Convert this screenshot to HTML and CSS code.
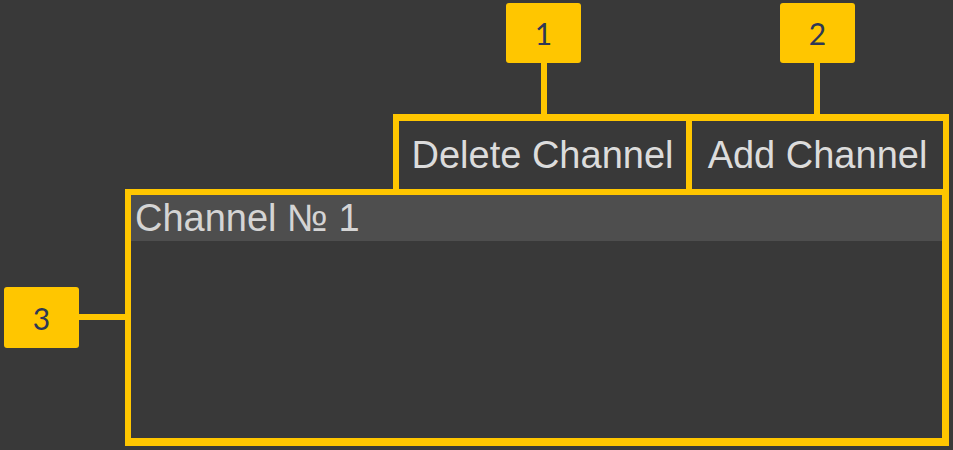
FILE: index.html
```html
<!DOCTYPE html>
<html>
<head>
<meta charset="utf-8">
<link rel="stylesheet" href="styles.css">
</head>
<body>
<div class="page">
  <div class="toolbar">
    <div class="btn-group">
      <div class="btn btn-delete">Delete Channel</div>
      <div class="btn btn-add">Add Channel</div>
    </div>
  </div>
  <div class="list">
    <div class="list-row selected">Channel № 1</div>
  </div>
</div>
<div class="callout callout-1">1</div>
<div class="callout callout-2">2</div>
<div class="callout callout-3">3</div>
</body>
</html>
```
FILE: styles.css
```css
html, body {
  margin: 0;
  padding: 0;
}
body {
  width: 953px;
  height: 450px;
  background: #393939;
  overflow: hidden;
  position: relative;
  font-family: "Liberation Sans", Arial, sans-serif;
}
.page {
  display: flex;
  flex-direction: column;
  margin-left: 125px;
  width: 824px;
  padding-top: 114px;
}
.toolbar {
  display: flex;
  justify-content: flex-end;
}
.btn-group {
  display: flex;
  border: 6px solid #ffc600;
  border-top-width: 7px;
  border-bottom: none;
}
.btn {
  height: 68px;
  display: flex;
  align-items: center;
  justify-content: center;
  color: #dcdcdc;
  font-size: 38px;
  white-space: nowrap;
}
.btn-delete {
  width: 287px;
}
.btn-add {
  width: 251px;
  border-left: 6px solid #ffc600;
}
.list {
  border: 6px solid #ffc600;
  border-right-width: 7px;
  border-bottom-width: 8px;
  height: 243px;
  box-sizing: content-box;
}
.list-row {
  height: 46px;
  display: flex;
  align-items: center;
  padding-left: 4px;
  color: #d4d4d4;
  font-size: 38px;
}
.selected {
  background: #4e4e4e;
}
.callout {
  position: absolute;
  width: 75px;
  height: 60px;
  background: #ffc600;
  border-radius: 3px;
  display: flex;
  align-items: center;
  justify-content: center;
  font-family: Lato, "Open Sans", sans-serif;
  font-size: 30px;
  color: #2e3856;
}
.callout::after {
  content: "";
  position: absolute;
  background: #ffc600;
}
.callout-1 {
  left: 506px;
  top: 3px;
}
.callout-1::after {
  left: 35px;
  top: 60px;
  width: 6px;
  height: 51px;
}
.callout-2 {
  left: 780px;
  top: 3px;
}
.callout-2::after {
  left: 34px;
  top: 60px;
  width: 6px;
  height: 51px;
}
.callout-3 {
  left: 4px;
  top: 287px;
  height: 61px;
}
.callout-3::after {
  left: 75px;
  top: 27px;
  width: 46px;
  height: 6px;
}
```
